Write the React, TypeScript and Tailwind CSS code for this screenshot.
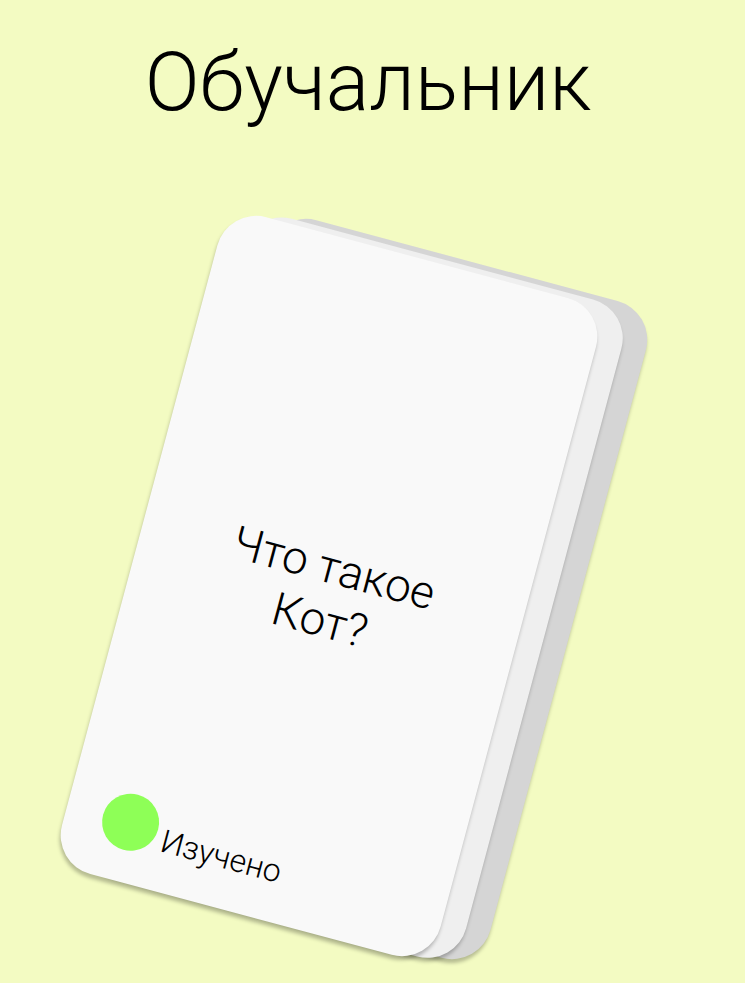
import React from "react";

const App: React.FC = () => {
  return (
    <div
      className="min-h-screen w-full overflow-hidden bg-[#f3fbc2] text-black"
      style={{ fontFamily: "Roboto, 'Noto Sans', sans-serif" }}
    >
      <h1 className="pr-[9px] pt-9 text-center text-[81px] font-light leading-[94px]">Обучальник</h1>

      <div className="ml-[133px] mt-[116px] h-[680px] w-[392px] rotate-[15deg]">
        <div className="relative h-full w-full">
          <div className="absolute left-[49px] top-[-10px] h-full w-full rounded-[40px] bg-[#d5d5d5] shadow-[0_4px_4px_rgba(0,0,0,0.25)]" />
          <div className="absolute left-[25px] top-[-5px] h-full w-full rounded-[40px] bg-[#efefef] shadow-[0_4px_4px_rgba(0,0,0,0.25)]" />
          <div className="absolute inset-0 flex flex-col rounded-[40px] bg-[#f9f9f9] shadow-[0_4px_4px_rgba(0,0,0,0.25)]">
            <div className="flex flex-1 items-center justify-center pt-[104px]">
              <p className="text-center text-[46px] font-light leading-[54px]">
                Что такое
                <br />
                Кот?
              </p>
            </div>
            <div className="flex items-end gap-[6px] pb-[32px] pl-[37px]">
              <div className="h-[57px] w-[57px] rounded-full bg-[#8eff57]" />
              <span className="text-[32px] font-light leading-[37px]">Изучено</span>
            </div>
          </div>
        </div>
      </div>
    </div>
  );
};

export default App;
